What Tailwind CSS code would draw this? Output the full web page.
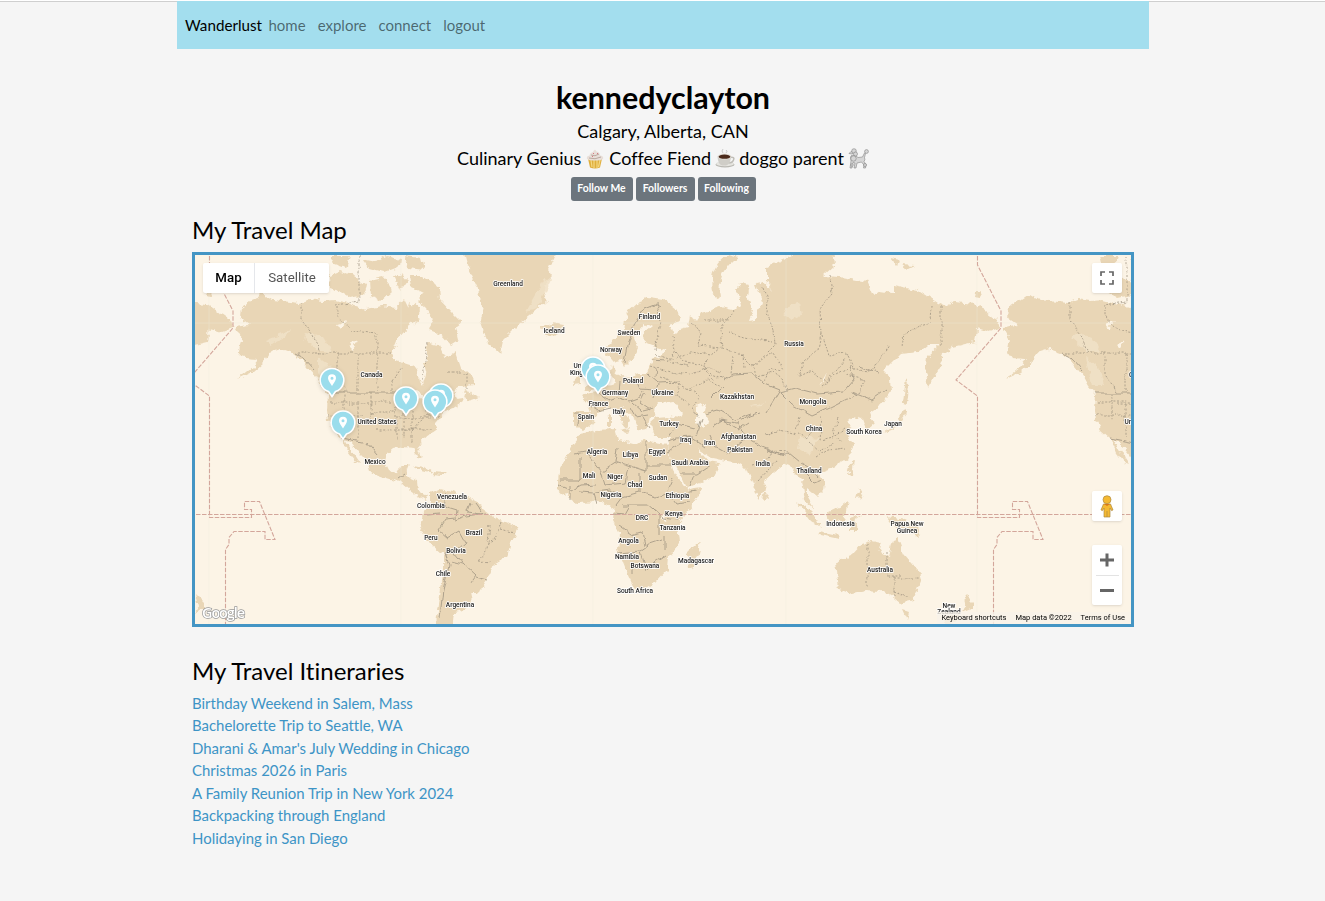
<!DOCTYPE html>
<html lang="en">
<head>
<meta charset="utf-8">
<title>Wanderlust</title>
<script src="https://cdn.jsdelivr.net/npm/@tailwindcss/browser@4"></script>
</head>
<body class="min-h-screen overflow-hidden border-t border-white bg-[#f5f5f5] font-['Lato',sans-serif] text-black [font-variant-ligatures:none]">
<div class="h-px bg-[#cfcfcf]"></div>
<div class="-mt-px ml-[177px] w-[972px]">
  <nav class="flex h-12 items-center bg-[#a3deee] pt-px pl-2">
    <a class="w-[83.500px] text-[15.2px]">Wanderlust</a>
    <div class="flex gap-[12px] text-[15px] text-black/55"><a>home</a><a>explore</a><a>connect</a><a>logout</a></div>
  </nav>
  <main class="px-[15px]">
    <header class="flex flex-col items-center pt-[29px]">
      <h1 class="text-[30.4px] leading-[38px] font-bold">kennedyclayton</h1>
      <p class="mt-[2px] text-[18px] leading-[27px]">Calgary, Alberta, CAN</p>
      <p class="flex items-center gap-1 text-[18px] leading-[27px] whitespace-nowrap"><span>Culinary Genius</span><svg class="size-[20px]" viewBox="0 0 20 20"><path d="M3 9.500 5 18.500Q10 20.500 15 18.500L17 9.500Z" fill="#dfae3c"/><path d="M6 11 7 18M9 11v8M12 11v8M15 11l-1.500 7" stroke="#f4d883" stroke-width="1.200"/><path d="M2 10Q1 7 4.500 6.500 5 3.500 8 3 10-1 11.500 2.500 15 3 15 6.500 19 7 18 10 15 12 10 11.500 5 12 2 10Z" fill="#e8ded8"/><path d="M4 9Q10 11 16 8M6 6Q10 8 14 5" stroke="#bba99f" fill="none"/><path d="M8 4l1 1M12 4l1 1M7 8l1-1" stroke="#d77983"/></svg><span>Coffee Fiend</span><svg class="size-[20px]" viewBox="0 0 20 20"><ellipse cx="10" cy="15.500" rx="9.500" ry="3" fill="#b9b8b2"/><ellipse cx="10" cy="14.800" rx="9" ry="2.400" fill="#e6e5e0"/><path d="M15 8.500q5-1 3.500 2.500-1 3-5 3" fill="none" stroke="#bfbdb7" stroke-width="1.500"/><path d="M2.500 7.500Q3 15.500 7 16.500h4q4.500-1 5-9Z" fill="#cfcdc7"/><ellipse cx="9.500" cy="7.500" rx="7" ry="2.900" fill="#e4e0d9"/><ellipse cx="9.500" cy="7.700" rx="5.900" ry="2.100" fill="#4b2a1b"/><path d="M8 4q-2-2 0-4M11 4q2-2 0-3" fill="none" stroke="#cbcbcb"/></svg><span>doggo parent</span><svg class="h-[21px] w-[21px]" viewBox="0 0 21 21" fill="#d6d6d6" stroke="#858585" stroke-width=".6"><path d="M8 8 10 9.500 14.500 9 16.500 5 17.500 5.500 16.500 9.500Q17.500 12 16 13.500L18 16.500 17.500 20H15.500L16 17 13.500 14 9 15 8 20H6L7 15 5 14.500 4 20H2L3 13Q1.500 8 4 7Z"/><path d="M1 5.500 3 3.500 6 4 4 6Z"/><circle cx="6" cy="3" r="2.300"/><circle cx="7.500" cy="6" r="2"/><circle cx="5.500" cy="10.500" r="2.700"/><circle cx="18.500" cy="3.500" r="1.900"/><circle cx="4" cy="17" r="1.300"/><circle cx="17" cy="17" r="1.500"/></svg></p>
      <div class="mt-[5px] flex gap-[3px] font-bold text-white">
        <button class="h-6 w-[62px] rounded-[3px] bg-[#6c757d] text-[10.4px]">Follow Me</button>
        <button class="h-6 w-[59px] rounded-[3px] bg-[#6c757d] text-[10.4px]">Followers</button>
        <button class="h-6 w-[58px] rounded-[3px] bg-[#6c757d] text-[10.4px]">Following</button>
      </div>
    </header>
    <h2 class="mt-[14px] mb-[7px] text-[24px] leading-[30px]">My Travel Map</h2>
    <section class="relative h-[375px] border-[3px] border-[#4495c4] bg-[#fcf4e6] font-['Roboto',sans-serif]">
      <svg class="block h-[369px] w-[936px]" viewBox="195 255 936 369">
        <defs>
          <filter id="coast" x="195" y="250" width="936" height="380" filterUnits="userSpaceOnUse" color-interpolation-filters="sRGB"><feTurbulence type="fractalNoise" baseFrequency=".14" numOctaves="3" seed="4"/><feDisplacementMap in="SourceGraphic" scale="7" xChannelSelector="R" yChannelSelector="G"/></filter>
          <filter id="wiggle" x="195" y="250" width="936" height="380" filterUnits="userSpaceOnUse" color-interpolation-filters="sRGB"><feTurbulence type="fractalNoise" baseFrequency=".1" numOctaves="2" seed="9"/><feDisplacementMap in="SourceGraphic" scale="6" xChannelSelector="R" yChannelSelector="G"/></filter>
          <g id="land">
            <!-- North America -->
            <path d="M235 327 250 325 240 318 241 308 250 302 262 294 272 300 300 303 310 299 323 301 335 300 347 303 365 309 383 306 395 308 404 298 408 306 413 314 420 318 411 325 403 332 397 340 392 352 394 360 410 365 418 370 420 382 423 386 426 376 423 363 427 358 425 347 428 342 438 344 445 359 455 352 460 367 473 378 473 385 458 388 447 394 455 391 457 399 463 398 464 402 452 410 443 413 436 422 438 428 431 433 424 439 418 447 422 458 419 459 414 447 403 446 393 448 387 453 385 463 390 473 398 472 402 465 409 465 405 475 416 480 417 491 428 496 425 501 410 491 400 482 387 478 370 472 367 462 358 451 350 441 345 439 353 452 361 464 356 462 348 452 342 438 333 430 328 420 327 410 328 395 321 387 315 376 303 361 293 353 281 349 268 353 263 363 253 372 238 379 252 368 259 360 245 359 240 352 242 340Z"/>
            <path d="M332 256 350 256 346 268 334 264ZM329 276 341 271 354 276 366 284 364 295 350 298 339 291 330 288ZM362 259 376 262 386 256 401 259 400 266 384 272 369 268ZM370 280 383 277 389 284 391 292 380 302 371 296ZM404 256 421 258 424 270 409 268ZM394 277 402 274 407 280 400 290ZM409 276 423 276 439 287 440 299 453 313 462 322 456 327 459 340 451 345 443 336 429 331 434 323 426 309 417 301 425 293 411 286ZM410 301 420 310 416 318 406 314ZM465 389 480 398 472 401 463 397Z"/>
            <path d="M414 465 425 467 434 473 422 470ZM434 472 446 473 442 476 433 475Z"/>
            <!-- Greenland and Iceland -->
            <path d="M463 250 467 265 477 287 483 307 480 320 488 343 500 354 503 340 520 323 533 313 547 300 543 286 552 276 548 270 557 250ZM542 326 552 323 564 325 563 332 551 337 543 333Z"/>
            <!-- South America -->
            <path d="M430 493 440 489 453 492 467 497 482 505 487 513 500 520 517 527 518 530 510 545 507 558 492 567 487 580 478 593 470 593 472 602 463 610 455 612 453 630 435 630 440 597 443 573 443 555 430 543 420 527 423 513 430 500Z"/>
            <!-- Africa -->
            <path d="M580 434 597 430 615 429 618 440 637 445 643 440 655 443 667 445 668 452 673 470 683 485 688 491 702 489 693 505 678 523 680 543 668 557 667 570 655 583 643 590 633 587 627 573 618 550 620 533 613 520 614 510 603 502 577 503 558 490 558 480 560 467 573 443ZM701 541 695 567 688 570 687 553Z"/>
            <!-- Europe and Asia -->
            <path d="M574 412 590 412 587 403 581 396 590 393 600 392 605 385 617 383 611 374 612 365 617 373 627 378 640 374 647 374 651 361 662 354 667 350 655 347 645 343 644 333 652 326 646 323 634 337 638 348 632 360 625 367 621 360 613 362 605 353 607 346 617 336 623 329 627 313 639 302 650 297 663 299 677 310 681 321 669 324 673 335 678 330 688 327 690 315 696 322 701 313 720 307 734 310 740 304 737 290 742 282 749 284 747 297 753 310 749 321 755 320 762 303 755 284 764 282 773 292 767 280 767 267 787 258 803 250 833 250 835 265 823 276 840 277 867 282 873 296 880 291 893 293 893 285 917 290 937 303 946 307 955 302 975 304 997 320 1001 328 990 332 977 328 975 342 953 347 943 353 940 367 928 387 925 373 927 357 940 345 928 345 918 353 900 355 883 372 890 378 891 391 882 404 870 412 874 424 867 430 863 419 853 416 847 421 853 426 846 431 854 445 847 460 836 466 818 473 825 482 824 490 817 497 807 489 807 497 814 509 805 501 802 480 796 474 788 463 779 468 766 479 763 492 758 498 752 481 747 468 738 463 712 458 697 448 708 461 720 463 713 477 687 488 680 473 670 457 667 446 670 437 653 437 650 423 657 417 650 417 647 430 640 431 635 419 620 407 630 420 627 428 613 410 607 408 597 413 592 423 583 430 574 425Z"/>
            <path d="M712 292Q708 265 730 254L738 257Q716 272 720 298ZM587 364 593 361 592 371 600 380 597 389 585 391 589 382ZM574 378 581 373 581 384 573 385ZM903 410 907 414 897 428 883 433 898 423ZM906 378 909 386 907 404 903 403ZM765 491 769 498 763 501ZM796 501 805 507 817 519 822 528 810 520ZM819 531 838 535 839 539 821 535ZM827 513 840 507 848 501 844 522 829 521ZM850 517 862 514 854 520 859 530 850 530ZM888 517 904 520 918 527 921 538 909 532 895 526ZM851 464 854 459 852 476 848 475ZM859 489 864 498 856 499ZM620 430 629 428 627 433ZM608 417 611 416 611 427 608 427ZM974 292 982 292 979 297 973 296ZM890 257 900 259 898 267ZM901 264 915 265 907 269Z"/>
            <!-- Australia and New Zealand -->
            <path d="M836 562 853 554 862 544 872 541 881 543 879 551 889 557 893 540 898 538 904 554 918 570 921 580 913 600 900 603 889 594 880 591 865 590 849 594 839 590ZM903 610 909 612 907 619ZM964 594 972 602 972 609 962 613 967 606ZM960 611 956 622 941 628 948 617Z"/>
          </g>
          <g id="water">
            <path d="M652 410 660 401 669 404 675 403 683 413 680 418 668 416 657 417ZM696 407 706 403 704 412 710 422 704 429 696 422ZM337 324 347 321 340 329ZM348 345 358 340 352 349ZM820 386 827 373 824 381ZM406 393 416 390 425 397 418 399 412 407 410 397ZM663 514 667 515 666 521 662 519Z"/>
          </g>
          <g id="borders">
            <g stroke-dasharray="2 1.600">
              <path d="M302 303v18l11 14 7 18M337 307v10l16 14 24 3v18M359 256v46l-24 3M297 353h95M337 353v22l12 18M358 353v40M377 353v40M392 382v11M392 382 402 367M331 402h28M344 393v28M349 404h27M358 404v34M371 393v28M328 415h35M371 402h21M371 412h26M371 421h25M376 430h38M396 398v42M404 403v36M412 407v37M397 418h33M401 429h32M412 432 430 412M425 410 438 405M420 416h20M427 342 423 380M448 373h19v15"/>
              <path d="M657 302 660 322 655 350M672 337 675 350 668 362 689 366M690 323 701 332 698 346 722 348 720 330 733 310M763 287 768 301 767 314 774 330 775 345 767 353M729 332 745 337 772 342M830 276 832 294 820 307 821 335M821 334 818 350 804 362 798 377M822 336 828 356 847 353 854 370 873 371 889 345M903 346 905 335 920 325 931 322 932 307M941 307v38M705 320h24"/>
              <path d="M656 354 671 360 690 352 710 355 720 347 742 356 752 366 773 352 784 370M675 352 684 362 700 364 711 374 727 380M650 366 670 372 691 375 710 367 720 373M660 376 674 382 689 389 708 379 723 388M754 364 757 376 773 372 783 380 787 390M799 376 812 370 826 382 846 358M846 375 865 380 860 392 845 401M690 390 700 396 693 407 698 418M680 384 677 396 690 406M707 359 704 370 714 380M733 357 731 374M743 355 744 368M763 383 770 368 781 371M820 387 835 375 848 368"/>
              <path d="M800 417 795 430 805 439 820 427M822 417 820 440 833 437 846 428M809 442 820 452 835 441M815 458 828 450 846 448M838 418 833 432 842 443M765 435 780 430 796 434M752 464 765 461 773 451 788 452M758 481 768 470 778 461M490 526 487 550 478 561M500 522 495 540 486 544M500 529 517 534M478 561 492 562M868 544v43M887 552v24h14M894 576v20M894 578h25M894 592 911 598"/>
            </g>
            <path d="M328 393h67l12 6M342 438 367 443 377 455M398 478 405 473M294 353 304 358 315 370"/>
            <path d="M447 493 444 506 457 510 456 518 445 519 438 530 447 538 459 531 465 542 454 552 463 563 476 575 470 583M470 504 467 512 481 514M475 502 482 512M487 513 466 516 455 520M445 553 449 565 443 590 440 618M463 564 451 561M476 577 487 580M428 514 440 513"/>
            <path d="M575 453 585 451 602 472 617 462 646 471M580 457v24M560 480h21l12-5M558 485 572 491 582 485 596 484M578 492 594 493 597 503M600 472 604 485 625 483 628 467M618 448 616 462M646 440v32M646 465h25M640 492 655 497 669 492M640 473 640 492 622 497 616 505M613 513 625 514 630 505M624 505 648 505 659 514M619 526 632 535 642 532 645 546M617 553 640 551 650 544 662 540M633 563v12M640 552 646 571 655 562 666 555M654 510 663 518 678 520M659 514v20M665 536v14M673 478 667 491 677 504 690 502M674 495 696 491M595 492 610 490 623 495M570 485 570 500"/>
            <path d="M723 381 733 374 752 373 765 384 780 390 766 413M780 392 795 388 818 394 843 392 853 380 850 365M780 393 792 405 812 416 830 408 846 400M704 414 718 410 735 420 752 414M724 386 711 399M719 420 737 423 748 417 760 413M738 423 746 438 762 447 784 456M767 450 781 455 789 453 800 462M667 452 676 446 690 437 704 447M668 441 676 438 694 437M680 474 697 474 711 465M694 476 690 486M697 436 702 418M713 426 722 420 738 430 749 423M709 434 714 446 728 454M727 456 735 446 748 435M801 463 810 468 818 478M803 472 814 483 822 480M851 392 872 400 886 390M858 366 878 373M600 394 608 400 616 397 629 401 640 397 643 391M620 381 619 395M635 378 640 389 655 390M632 402 642 411 654 408M645 393 640 403 650 410M648 374 658 383 681 382M631 408 636 417 648 415M574 413 579 413 578 426M587 404 598 411 611 408M656 368 655 377M644 417 650 427"/>
            <path d="M625 362 629 342 634 325 645 308 655 304M655 303 660 306M652 360 665 361M658 384 653 398M669 438 678 424 695 428"/>
          </g>
          <g id="dateline"><path d="M977.500 256v9L1001 311v17L956 380 977.500 396V517.500h42v-8h-7v-8h15L1043 539.500h-10v-8h-31l-5 6v7l-3.500 5V624"/></g>
        </defs>
        <g fill="#e9d6b6" filter="url(#coast)"><use href="#land"/><use href="#land" x="-768"/><use href="#land" x="768"/></g>
        <g fill="#f1e2c8" opacity=".85" filter="url(#coast)"><path d="M307 332 324 338 333 353 320 352 304 338ZM318 357 331 367 340 385 331 390 318 372ZM265 340 290 330 286 336 270 345ZM1075 332 1092 338 1101 353 1088 352 1072 338ZM1086 357 1099 367 1104 385 1092 385ZM789 304 799 302 801 315 790 320 783 315ZM800 436 820 438 809 455 798 448ZM750 407 764 402 760 406ZM545 278 551 280 537 309 526 312Z"/></g>
        <g fill="#fcf4e6" filter="url(#coast)"><use href="#water"/><use href="#water" x="768"/></g>
        <g fill="none" stroke="#a09582" stroke-width=".9" opacity=".9" filter="url(#wiggle)"><use href="#borders"/><use href="#borders" x="768"/></g>
        <g stroke="#efe9dc" stroke-width=".7" opacity=".5"><path d="M195 323h936M209 255v369M401 255v369M593 255v369M786 255v369M977 255v369"/></g>
        <g fill="none" stroke="#d3a69b" stroke-width="1.100" stroke-dasharray="4.500 1.500"><path d="M196 514.500h935"/><use href="#dateline"/><use href="#dateline" x="-768"/></g>
        <g fill="#222" stroke="#fff" stroke-opacity=".85" stroke-width="1.800" stroke-linejoin="round" paint-order="stroke" font-size="6.500" font-weight="500" text-anchor="middle">
          <text x="371.500" y="377">Canada</text><text x="377" y="424.300">United States</text><text x="375" y="464">Mexico</text><text x="508" y="286.300">Greenland</text><text x="554" y="333">Iceland</text><text x="452" y="499.300">Venezuela</text><text x="431" y="508.300">Colombia</text><text x="431" y="540">Peru</text><text x="474" y="534.500">Brazil</text><text x="456" y="552.500">Bolivia</text><text x="443" y="576">Chile</text><text x="460" y="607.300">Argentina</text>
          <text x="649.500" y="319.300">Finland</text><text x="629" y="335">Sweden</text><text x="611" y="351.500">Norway</text><text x="583" y="368">United</text><text x="583" y="375">Kingdom</text><text x="633" y="383">Poland</text><text x="615" y="394.500">Germany</text><text x="662.500" y="394.500">Ukraine</text><text x="598.500" y="406">France</text><text x="619" y="414.300">Italy</text><text x="586" y="418.500">Spain</text><text x="669" y="426">Turkey</text>
          <text x="597" y="453.500">Algeria</text><text x="630.500" y="456.500">Libya</text><text x="657" y="453.800">Egypt</text><text x="589" y="478">Mali</text><text x="615" y="478.500">Niger</text><text x="635" y="486.500">Chad</text><text x="658" y="480">Sudan</text><text x="611" y="496.500">Nigeria</text><text x="677.500" y="498">Ethiopia</text><text x="642" y="520.300">DRC</text><text x="674" y="516">Kenya</text><text x="672.500" y="530.300">Tanzania</text><text x="628.500" y="543">Angola</text><text x="627" y="558.500">Namibia</text><text x="645" y="567.800">Botswana</text><text x="635" y="592.500">South Africa</text><text x="696" y="563.300">Madagascar</text>
          <text x="794" y="345.700">Russia</text><text x="737" y="398.800">Kazakhstan</text><text x="813" y="403.500">Mongolia</text><text x="814" y="430.500">China</text><text x="864" y="433.500">South Korea</text><text x="893" y="426">Japan</text><text x="685.500" y="442">Iraq</text><text x="709.500" y="445.300">Iran</text><text x="738.500" y="438.500">Afghanistan</text><text x="740" y="452.300">Pakistan</text><text x="690" y="465">Saudi Arabia</text><text x="763" y="466.300">India</text><text x="809" y="473">Thailand</text><text x="840.500" y="525.800">Indonesia</text><text x="907" y="526.300">Papua New</text><text x="907" y="533">Guinea</text><text x="880" y="571.500">Australia</text><text x="949" y="607.500">New</text><text x="949" y="613.800">Zealand</text><text x="1140" y="377">Canada</text><text x="1144" y="424.300">United States</text>
        </g>
        <defs>
          <g id="pin"><path d="M0 16-3.500 11A11.800 11.800 0 1 1 3.500 11Z" fill="#9bddec" stroke="#fff" stroke-width="1.600"/><path fill-rule="evenodd" d="M0 5.500C-1.500 3-4-.200-4-2.200a4 4 0 1 1 8 0C4-.200 1.500 3 0 5.500ZM0-3.800a1.500 1.500 0 1 0 0 3 1.500 1.500 0 0 0 0-3Z" fill="#fff"/></g>
        </defs>
        <g class="drop-shadow-sm"><use href="#pin" x="332" y="380.500"/><use href="#pin" x="343" y="423"/><use href="#pin" x="406" y="399"/><use href="#pin" x="441" y="396"/><use href="#pin" x="435" y="402"/><use href="#pin" x="593" y="369"/><use href="#pin" x="598" y="377"/></g>
        <text x="202" y="618" font-family="Open Sans" font-size="14.500" textLength="43" font-weight="600" fill="#fff" stroke="#999" stroke-width="1.400" paint-order="stroke">Google</text>
      </svg>
      <div class="absolute top-2 left-2 flex h-[30px] rounded-[2px] bg-white text-[13.300px] shadow"><span class="flex w-[52px] items-center justify-center border-r border-gray-200 font-medium">Map</span><span class="flex w-[74px] items-center justify-center text-[#565656]">Satellite</span></div>
      <div class="absolute top-2 right-[9px] grid size-[30px] place-items-center rounded-[2px] bg-white shadow"><svg class="size-[14px]" viewBox="0 0 14 14" fill="none" stroke="#666" stroke-width="1.700"><path d="M1 5V1h4M9 1h4v4M13 9v4H9M5 13H1V9"/></svg></div>
      <div class="absolute top-[236px] right-[9px] grid size-[30px] place-items-center rounded-[2px] bg-white shadow"><svg class="h-[23px] w-[14px]" viewBox="0 0 14 23" fill="#f5b932" stroke="#ae8a43" stroke-width=".7"><path d="M3.500 9h7L13 15l-1.500.600L10 13v9H4v-9l-1.500 2.600L1 15Z"/><path d="M7 16v6"/><path d="M4 9h6l-3 2Z" fill="#d8771e" stroke="none"/><circle cx="7" cy="4.700" r="4"/></svg></div>
      <div class="absolute top-[290px] right-[9px] flex h-[60px] w-[30px] flex-col items-center rounded-[2px] bg-white shadow"><svg class="h-[30px] w-[14px]" viewBox="0 0 14 30" stroke="#666" stroke-width="3"><path d="M0 15h14M7 8.500v13"/></svg><div class="h-px w-[23px] bg-[#e3e3e3]"></div><svg class="h-[29px] w-[14px]" viewBox="0 0 14 29" stroke="#666" stroke-width="3"><path d="M0 14.500h14"/></svg></div>
      <div class="absolute right-0 bottom-0 flex h-[12px] items-center gap-[9px] bg-[#f8f3ea]/80 pr-[6px] pl-1 text-[7.500px] whitespace-nowrap text-black"><span>Keyboard shortcuts</span><span>Map data ©2022</span><span>Terms of Use</span></div>
    </section>
    <h2 class="mt-[29px] mb-[5.700px] text-[24px] leading-[30px]">My Travel Itineraries</h2>
    <ul class="text-[14.950px] leading-[22.500px] text-[#3d94c6]">
      <li>Birthday Weekend in Salem, Mass</li><li>Bachelorette Trip to Seattle, WA</li><li>Dharani &amp; Amar's July Wedding in Chicago</li><li>Christmas 2026 in Paris</li><li>A Family Reunion Trip in New York 2024</li><li>Backpacking through England</li><li>Holidaying in San Diego</li>
    </ul>
  </main>
</div>
</body>
</html>
